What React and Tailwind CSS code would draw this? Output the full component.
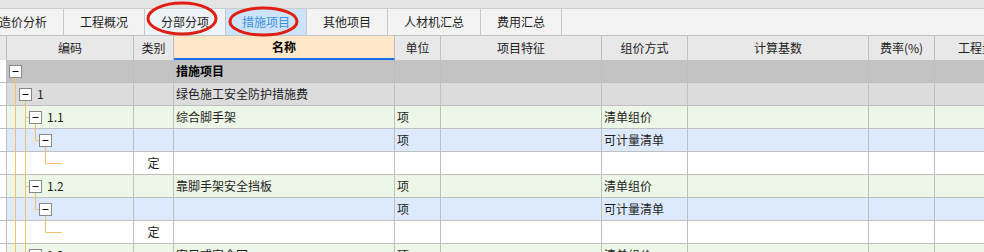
import React from "react";

// column widths incl. 1px right border
const COLS = [7, 127, 40, 221, 46, 161, 86, 181, 66];

const TABS = [
  { label: "造价分析", first: true },
  { label: "工程概况" },
  { label: "分部分项", hover: true },
  { label: "措施项目", active: true },
  { label: "其他项目" },
  { label: "人材机汇总" },
  { label: "费用汇总" },
];

const HEADERS = ["", "编码", "类别", "名称", "单位", "项目特征", "组价方式", "计算基数", "费率(%)", "工程量表达式"];

const LINE = "#f9bf6a";

function Box({ cx }) {
  return (
    <g>
      <rect x={cx - 6} y={5.5} width={12} height={12} fill="#fff" stroke="#888" />
      <line x1={cx - 3} y1={11.5} x2={cx + 3} y2={11.5} stroke="#111" />
    </g>
  );
}

// tree drawing for each row kind
function Tree({ kind }) {
  const v = (x, y1, y2) => <line x1={x} y1={y1} x2={x} y2={y2} stroke={LINE} />;
  const h = (x1, x2) => <line x1={x1} y1={11.5} x2={x2} y2={11.5} stroke={LINE} />;
  let parts = null;
  if (kind === "root") parts = (<>{v(15.5, 17.5, 23)}<Box cx={15.5} /></>);
  if (kind === "group")
    parts = (<>{v(15.5, 0, 23)}{v(25.5, 17.5, 23)}<Box cx={25.5} /></>);
  if (kind === "item")
    parts = (<>{v(15.5, 0, 23)}{v(25.5, 0, 23)}{h(25.5, 29.5)}{v(35.5, 17.5, 23)}<Box cx={35.5} /></>);
  if (kind === "sub")
    parts = (<>{v(15.5, 0, 23)}{v(25.5, 0, 23)}{v(35.5, 0, 11.5)}{h(35.5, 39.5)}{v(45.5, 17.5, 23)}<Box cx={45.5} /></>);
  if (kind === "leaf")
    parts = (<>{v(15.5, 0, 23)}{v(25.5, 0, 23)}{v(45.5, 0, 11.5)}{h(45.5, 62)}</>);
  return (
    <svg className="absolute left-0 top-0 pointer-events-none" width="133" height="23">
      {parts}
    </svg>
  );
}

const ROWS = [
  { kind: "root", bg: "bg-[#c3c3c3]", name: "措施项目", bold: true },
  { kind: "group", bg: "bg-[#dcdcdc]", code: "1", pad: "pl-[30px]", name: "绿色施工安全防护措施费" },
  { kind: "item", bg: "bg-[#edf7e7]", code: "1.1", pad: "pl-[40px]", name: "综合脚手架", unit: "项", way: "清单组价" },
  { kind: "sub", bg: "bg-[#dde9fc]", unit: "项", way: "可计量清单" },
  { kind: "leaf", bg: "bg-white", type: "定" },
  { kind: "item", bg: "bg-[#edf7e7]", code: "1.2", pad: "pl-[40px]", name: "靠脚手架安全挡板", unit: "项", way: "清单组价" },
  { kind: "sub", bg: "bg-[#dde9fc]", unit: "项", way: "可计量清单" },
  { kind: "leaf", bg: "bg-white", type: "定" },
  { kind: "item", bg: "bg-[#edf7e7]", code: "1.3", pad: "pl-[40px]", name: "密目式安全网", unit: "项", way: "清单组价" },
];

function Row({ r }) {
  const cell = "shrink-0 h-full border-r border-[#bfbfbf] flex items-center overflow-hidden whitespace-nowrap";
  return (
    <div className="relative flex h-[23px] border-b border-[#bfbfbf]">
      <div className={`${cell} w-[7px] bg-white`} />
      <div className={`${cell} w-[127px] ${r.bg} ${r.pad || ""}`}>{r.code}</div>
      <div className={`${cell} w-[40px] ${r.bg} justify-center`}>{r.type}</div>
      <div className={`${cell} w-[221px] ${r.bg} px-[2px] ${r.bold ? "font-bold text-black" : ""}`}>{r.name}</div>
      <div className={`${cell} w-[46px] ${r.bg} px-[2px]`}>{r.unit}</div>
      <div className={`${cell} w-[161px] ${r.bg}`} />
      <div className={`${cell} w-[86px] ${r.bg} px-[2px]`}>{r.way}</div>
      <div className={`${cell} w-[181px] ${r.bg}`} />
      <div className={`${cell} w-[66px] ${r.bg}`} />
      <div className={`flex-1 h-full ${r.bg}`} />
      <Tree kind={r.kind} />
    </div>
  );
}

export default function App() {
  return (
    <div className="relative w-[984px] h-[252px] overflow-hidden bg-white text-[12px] text-[#1e1e1e] font-['Noto_Sans_CJK_SC','Noto_Sans',sans-serif]">
      {/* top band */}
      <div className="h-[9px] bg-[#e4e4e4] border-b border-[#cdcdcd]" />

      {/* tabs */}
      <div className="flex h-[27px] bg-[#f3f3f3] border-b border-[#c4c4c4]">
        {TABS.map((t) => (
          <div
            key={t.label}
            className={`h-full flex items-center px-4 border-r border-[#c8c8c8] whitespace-nowrap ${
              t.first ? "-ml-[17px]" : ""
            } ${t.active ? "bg-[#cde4f8] text-[#3b8fe4]" : t.hover ? "bg-[#eef3f9]" : ""}`}
          >
            {t.label}
          </div>
        ))}
      </div>

      {/* header */}
      <div className="flex h-[24px] bg-[#e8e8e8] text-[#222]">
        {HEADERS.map((hd, i) => (
          <div
            key={i}
            style={i < COLS.length ? { width: COLS[i] } : undefined}
            className={`h-full flex items-center justify-center whitespace-nowrap overflow-hidden ${
              i < COLS.length ? "shrink-0 border-r border-[#c0c0c0]" : "flex-1 justify-start pl-[23px]"
            } ${i === 3 ? "bg-[#fee6c9] border-b-2 border-b-[#1a6fe8] font-bold text-black" : ""}`}
          >
            {hd}
          </div>
        ))}
      </div>

      {/* rows */}
      {ROWS.map((r, i) => (
        <Row key={i} r={r} />
      ))}

      {/* red annotation ellipses */}
      <svg className="absolute left-0 top-0 pointer-events-none" width="984" height="44">
        <ellipse cx="182" cy="18.5" rx="34" ry="15.5" fill="none" stroke="#e01f14" strokeWidth="3" />
        <ellipse cx="263.5" cy="21.5" rx="33.5" ry="13.5" fill="none" stroke="#e01f14" strokeWidth="3" />
      </svg>
    </div>
  );
}
